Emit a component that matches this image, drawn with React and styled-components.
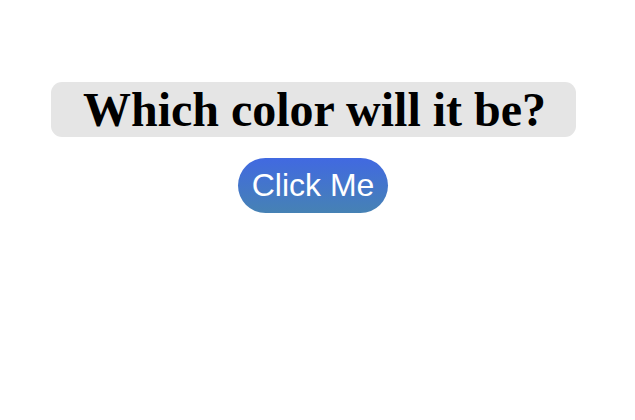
import React from "react";
import styled, { createGlobalStyle } from "styled-components";

const Global = createGlobalStyle`
  html, body { margin: 0; padding: 0; background: #fff; }
  body { font-family: "Liberation Serif", serif; }
`;

const Page = styled.main`
  display: flex;
  flex-direction: column;
  align-items: center;
  padding-top: 82px;
  padding-right: 9px;
  gap: 21px;
`;

const Heading = styled.h1`
  margin: 0;
  width: 525px;
  box-sizing: border-box;
  height: 55px;
  display: flex;
  align-items: center;
  justify-content: center;
  padding-left: 3px;
  padding-bottom: 1px;
  background: #e5e5e5;
  border-radius: 11px;
  font-family: "Liberation Serif", "Times New Roman", serif;
  font-weight: bold;
  font-size: 48px;
  color: #000;
`;

const Button = styled.button`
  width: 150px;
  height: 55px;
  border: none;
  border-radius: 28px;
  background: linear-gradient(to bottom, #4169e1, #4682b4);
  color: #fff;
  font-family: "Liberation Sans", Arial, sans-serif;
  font-size: 32px;
  padding: 0;
  cursor: pointer;
`;

export default function App() {
  return (
    <>
      <Global />
      <Page>
        <Heading>Which color will it be?</Heading>
        <Button>Click Me</Button>
      </Page>
    </>
  );
}
